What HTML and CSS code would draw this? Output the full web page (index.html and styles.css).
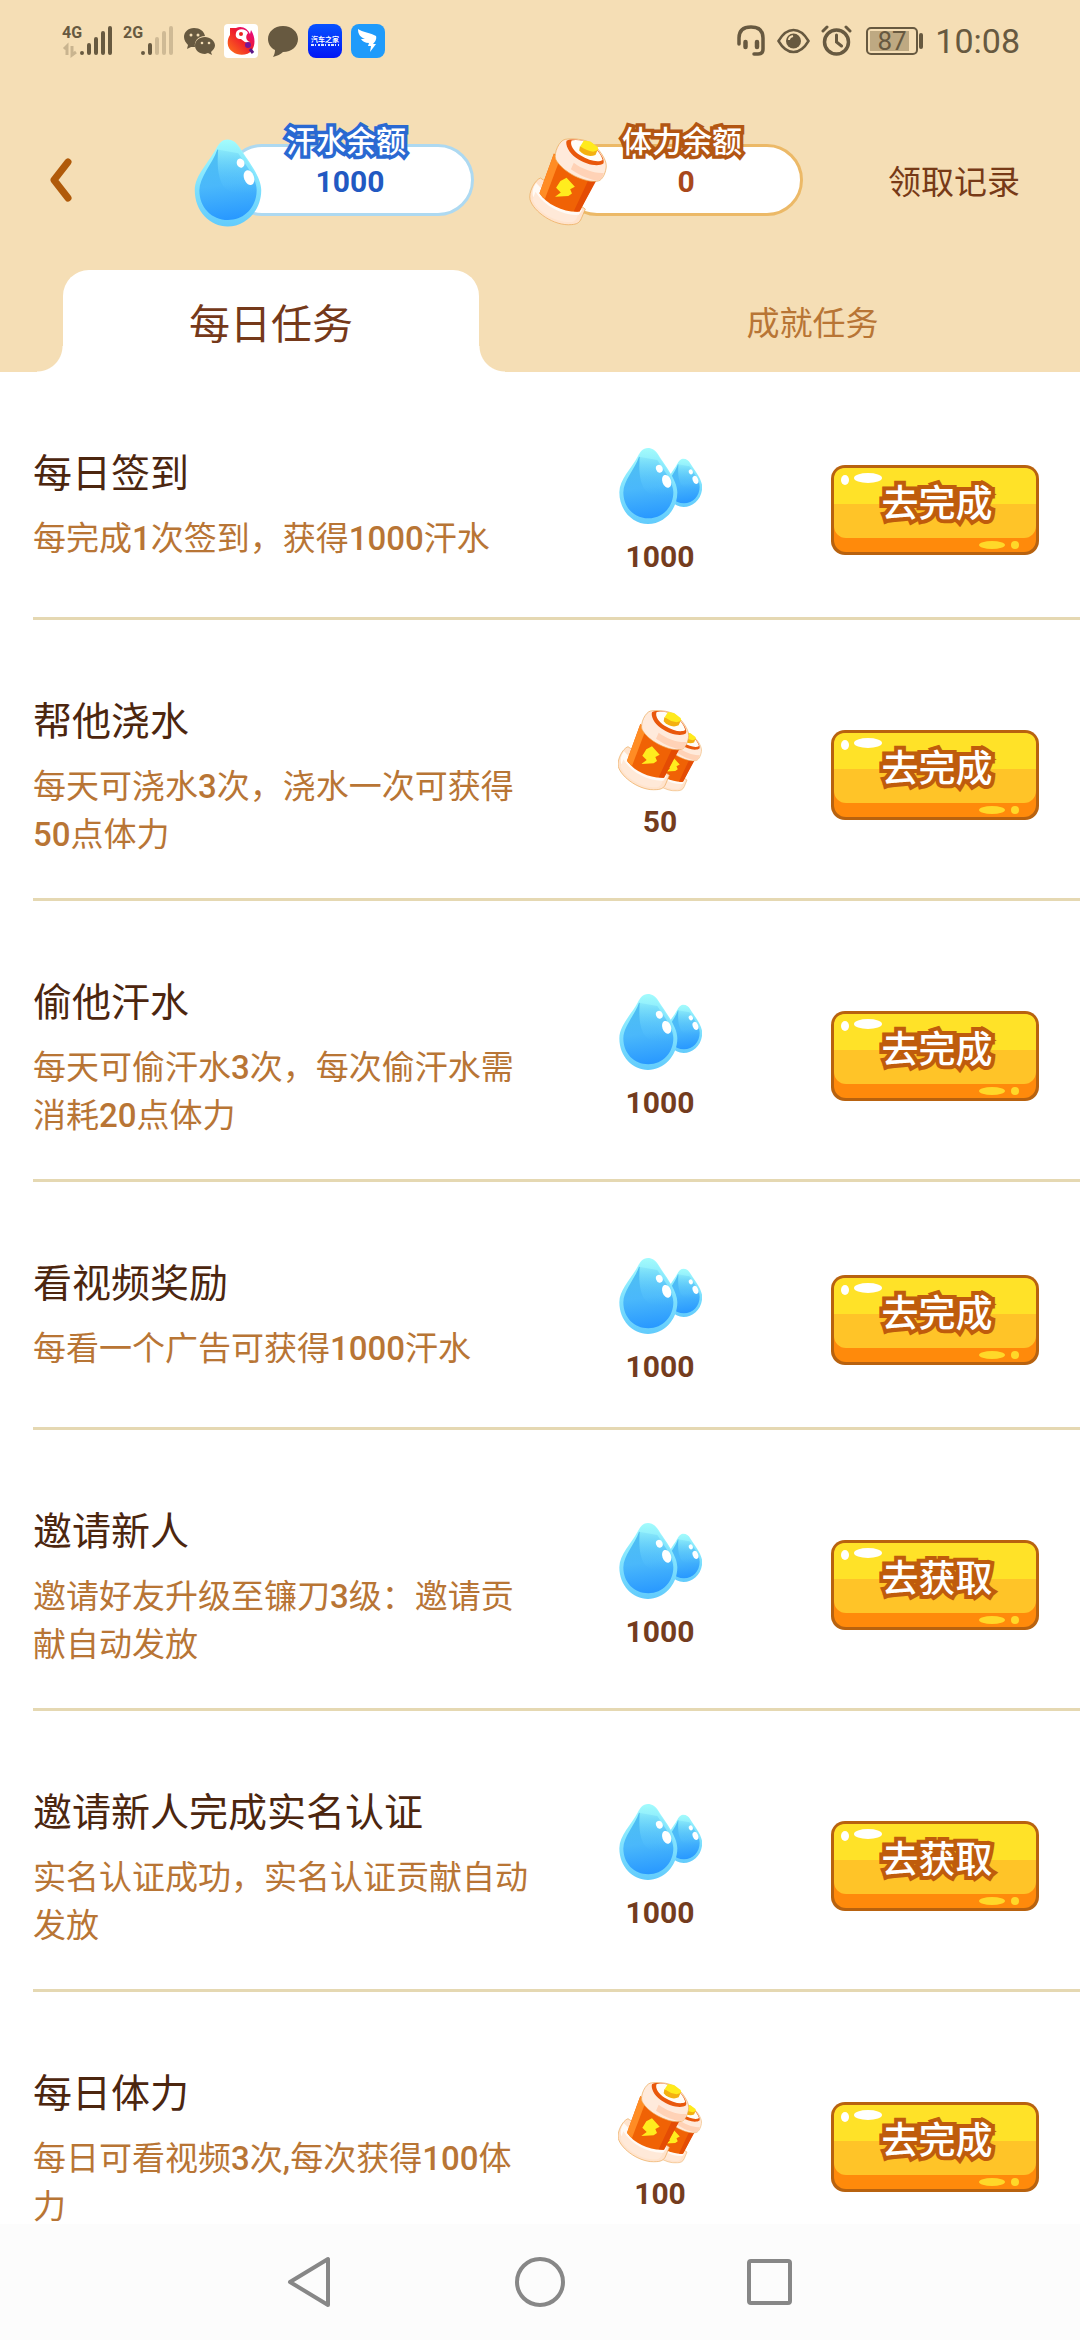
FILE: index.html
```html
<!DOCTYPE html>
<html lang="zh-CN">
<head>
<meta charset="utf-8">
<meta name="viewport" content="width=device-width, initial-scale=1">
<title>每日任务</title>
<link rel="stylesheet" href="styles.css">
</head>
<body>
<svg class="defs" aria-hidden="true">
  <defs>
    <linearGradient id="rim" x1="0" y1="0" x2="0" y2="1">
      <stop offset="0" stop-color="#a2fbff"/><stop offset="1" stop-color="#62cbfc"/>
    </linearGradient>
    <linearGradient id="core" x1="0.4" y1="0" x2="0.5" y2="1">
      <stop offset="0" stop-color="#4fc0f2"/><stop offset="0.5" stop-color="#4ab8fb"/><stop offset="1" stop-color="#2898ff"/>
    </linearGradient>
    <linearGradient id="facet" x1="0" y1="0" x2="0" y2="1">
      <stop offset="0" stop-color="#a2fbfb"/><stop offset="1" stop-color="#55c2ff" stop-opacity="0"/>
    </linearGradient>
    <symbol id="drop" viewBox="176 82 178 232">
      <path fill="url(#rim)" d="M264 84C248 84 240 97 234 108C214 146 178 178 178 217C178 272 218 312 264 312C310 312 352 272 352 217C352 180 314 136 296 106C287 91 276 84 264 84Z"/>
      <path fill="url(#core)" d="M237 110C224 148 190 182 190 217C190 262 222 295 265 295C309 295 340 260 340 217C340 184 309 148 292 120Z"/>
      <path fill="url(#facet)" d="M240 102C250 83 276 80 292 104C310 134 346 176 342 216C330 230 280 232 258 212C236 190 236 140 240 102Z"/>
      <ellipse cx="298" cy="146" rx="10" ry="12" fill="#fff" transform="rotate(-20 298 146)"/>
      <ellipse cx="320" cy="184" rx="13" ry="20" fill="#fff" transform="rotate(-20 320 184)"/>
    </symbol>
    <symbol id="cell" viewBox="172 88 216 242">
      <path fill="#ffe3cc" stroke="#eba856" stroke-width="2" d="M204 198C188 203 170 238 175 258C184 290 240 332 290 327C304 326 312 322 317 310L328 284Z"/>
      <path fill="#fffaf5" d="M192 212C182 224 180 242 184 250C216 292 270 308 310 300L320 286L240 262Z"/>
      <path fill="#ffe9d8" d="M190 236C214 276 266 302 308 300C304 312 300 318 290 320C244 322 194 290 182 258Z"/>
      <path fill="#f06205" d="M241 130L201 240C222 272 270 294 312 291L358 200Z"/>
      <path fill="#ff8c24" d="M241 130L201 240C206 247 210 251 216 256L256 150Z"/>
      <path fill="#e44c04" d="M340 196L296 290C302 291 306 292 312 291L360 202Z"/>
      <path fill="#ffeadb" stroke="#eba856" stroke-width="2" d="M272 91C256 94 240 128 246 146C264 182 330 214 364 206C376 204 386 180 386 164C386 146 366 116 344 101C322 89 290 88 272 91Z"/>
      <path fill="#ffd2b6" d="M288 174C316 194 346 205 364 205C372 203 377 194 379 184C352 186 320 174 296 156Z"/>
      <path fill="#e9580c" d="M276 95C272 106 282 128 302 142C330 162 364 168 378 158C384 148 366 120 343 103C320 91 284 88 276 95Z"/>
      <path fill="#fffdf8" d="M290 94C284 106 296 124 314 135C338 150 364 156 376 148C372 132 356 114 342 104C326 94 302 90 290 94Z"/>
      <path fill="#f4b010" d="M313 110L311 122C322 136 342 141 356 134L363 118Z"/>
      <path fill="#ffea1c" d="M324 94L342 97L362 112Q366 118 360 122L350 125Q330 122 314 110Z"/>
      <path fill="#ffec1e" d="M276 197L299 222L286 229L291 241L281 248L244 250L260 238L247 225L259 206Z"/>
    </symbol>
    <symbol id="reward-water" viewBox="174 69 252 282">
      <use href="#drop" x="315" y="115" width="113" height="147"/>
      <use href="#drop" x="176" y="82" width="178" height="232"/>
    </symbol>
    <symbol id="reward-energy" viewBox="174 82 252 282">
      <use href="#cell" x="264" y="151" width="162" height="182"/>
      <use href="#cell" x="172" y="88" width="216" height="242"/>
    </symbol>
    <symbol id="gloss" viewBox="0 0 208 90">
      <rect width="208" height="90" rx="14" fill="#b8620f"/>
      <rect x="3" y="3" width="202" height="84" rx="12" fill="#ff8a0b"/>
      <rect x="3" y="3" width="202" height="70" rx="12" fill="#ffc428"/>
      <path fill="#ffe228" d="M3 39V15Q3 3 15 3H193Q205 3 205 15V39Z"/>
      <ellipse cx="14" cy="15" rx="4" ry="5" fill="#fff"/>
      <ellipse cx="37" cy="13" rx="14" ry="5" fill="#fff"/>
      <ellipse cx="161" cy="80" rx="13" ry="4" fill="#ffd829"/>
      <ellipse cx="184" cy="80" rx="4" ry="4" fill="#ffd829"/>
    </symbol>
  </defs>
</svg>

<header class="header">
  <div class="status">
    <div class="status-group">
      <svg width="52" height="34" viewBox="0 0 52 34">
        <text x="0" y="14" class="net">4G</text>
        <g stroke="#675940" stroke-width="4" stroke-linecap="round"><path d="M20 29v0M27 21v8M34 15v14M41 9v20M48 4v25"/></g>
        <path d="M5 31V22L2 25M10 22v9l4-3" stroke="#c9b48f" stroke-width="3" fill="none"/>
      </svg>
      <svg width="51" height="34" viewBox="0 0 51 34">
        <text x="0" y="14" class="net">2G</text>
        <g stroke="#675940" stroke-width="4" stroke-linecap="round"><path d="M20 29v0M27 21v8"/><path stroke="#cfba95" d="M34 15v14M41 9v20M48 4v25"/></g>
      </svg>
      <svg width="32" height="34" viewBox="0 0 32 34" fill="#675940">
        <path d="M11 4C5 4 1 8 1 13C1 16 3 19 5 21L4 25L8 23H12C11 17 15 12 22 12C21 7 17 4 11 4Z"/>
        <path d="M22 13C16 13 12 17 12 21.500C12 26 16 30 22 30L25 29L29 31L28 28C30 26 32 24 32 21.500C32 17 27 13 22 13Z"/>
        <g fill="#f5deb5"><circle cx="8" cy="11" r="1.500"/><circle cx="15" cy="11" r="1.500"/><circle cx="19" cy="19" r="1.300"/><circle cx="26" cy="19" r="1.300"/></g>
      </svg>
      <svg width="34" height="34" viewBox="0 0 34 34">
        <defs><linearGradient id="fish" x1="1" y1="0" x2="0" y2="1"><stop offset="0" stop-color="#e3009c"/><stop offset="0.450" stop-color="#ee1c2c"/><stop offset="1" stop-color="#ff7a18"/></linearGradient></defs>
        <rect width="34" height="34" rx="4" fill="#fff"/>
        <path fill="url(#fish)" d="M6 4H12C18 1 24 5 26 10L27 6C32 14 31 22 28 26C24 32 14 32 9 28C2 24 3 15 6 11Z"/>
        <path fill="#fff" d="M12 9C13 4 22 4 24 9C21 12 22 17 26 18C21 20 19 16 17 15C13 15 11 13 12 9Z"/>
        <circle cx="17" cy="10" r="2" fill="#e8231f"/><circle cx="24" cy="21" r="3" fill="#791695"/>
        <path d="M26 25l3 4" stroke="#5c1688" stroke-width="3"/>
      </svg>
      <svg width="32" height="34" viewBox="0 0 32 34"><path fill="#675940" d="M16 2C7 2 1 8 1 15C1 20 4 24 8 26C8 29 7 31 6 33C10 32 14 30 16 28C25 28 31 22 31 15C31 8 25 2 16 2Z"/></svg>
      <svg width="34" height="34" viewBox="0 0 34 34">
        <defs><linearGradient id="auto" x1="0" y1="0" x2="0" y2="1"><stop offset="0" stop-color="#0652ff"/><stop offset="1" stop-color="#0316f5"/></linearGradient></defs>
        <rect width="34" height="34" rx="8" fill="url(#auto)"/>
        <text x="17" y="18" text-anchor="middle" class="app-name">汽车之家</text>
        <path d="M3 21h28" stroke="#dce5ff" stroke-width="2" stroke-dasharray="3 1 1 2 2 1"/>
      </svg>
      <svg width="34" height="34" viewBox="0 0 34 34">
        <rect width="34" height="34" rx="8" fill="#1f9bfb"/>
        <path fill="#fff" d="M7 5C11 8 20 9 25 12C26 15 24 18 22 20H25L19 28L20 22H17L18 19C14 19 11 17 10 15L14 15C9 13 7 10 7 5Z"/>
      </svg>
    </div>
    <div class="status-group status-right">
      <svg width="30" height="34" viewBox="0 0 30 34" fill="none" stroke="#675940" stroke-width="3.500" stroke-linecap="round"><path d="M3 20V14C3 6 8 3 15 3C22 3 27 6 27 14V25Q27 30 22 30H18"/><path stroke-width="4.500" d="M9.500 18v5M21 18v5"/></svg>
      <svg width="33" height="34" viewBox="0 0 33 34"><path fill="none" stroke="#675940" stroke-width="2.500" d="M1.500 17C5 11 10 6 16.500 6S28 11 31.500 17C28 23 23 28 16.500 28S5 23 1.500 17Z"/><circle cx="16.500" cy="17" r="7.500" fill="#675940"/><path d="M12 16Q12 13 16 12" stroke="#f5deb5" stroke-width="2" fill="none"/></svg>
      <svg width="31" height="34" viewBox="0 0 31 34" fill="none" stroke="#675940" stroke-width="3.500" stroke-linecap="round"><circle cx="15.500" cy="18" r="12"/><path stroke-width="3" d="M15.500 11v7l5 4M2 7l4-4M25 3l4 4"/></svg>
      <svg width="61" height="34" viewBox="0 0 61 34"><rect x="4" y="4" width="50" height="26" rx="4" fill="none" stroke="#675940" stroke-width="2"/><rect x="7" y="7" width="39" height="20" fill="#bea982"/><path d="M58 11v12" stroke="#675940" stroke-width="4" stroke-linecap="round"/><text x="29" y="26" text-anchor="middle" class="charge">87</text></svg>
      <span class="clock">10:08</span>
    </div>
  </div>

  <div class="topbar">
    <button class="back" aria-label="返回"><svg width="22" height="46" viewBox="0 0 22 46"><path d="M18 5L4 23L18 41" fill="none" stroke="#b05a0a" stroke-width="7" stroke-linecap="round" stroke-linejoin="round"/></svg></button>
    <div class="balances">
      <div class="balance water">
        <svg class="balance-icon" width="68" height="90"><use href="#drop"/></svg>
        <span class="balance-label">汗水余额</span>
        <span class="balance-value">1000</span>
      </div>
      <div class="balance energy">
        <svg class="balance-icon" width="78" height="88"><use href="#cell"/></svg>
        <span class="balance-label">体力余额</span>
        <span class="balance-value">0</span>
      </div>
    </div>
    <a class="records" href="#records">领取记录</a>
  </div>

  <div class="tabs" role="tablist">
    <button class="tab tab-active" role="tab" aria-selected="true">每日任务</button>
    <button class="tab" role="tab" aria-selected="false">成就任务</button>
  </div>
</header>

<main class="content">
  <ul class="tasks">
    <li class="task">
      <div class="info"><h2 class="title">每日签到</h2><p class="desc">每完成<b>1</b>次签到，获得<b>1000</b>汗水</p></div>
      <div class="reward"><svg width="84" height="94"><use href="#reward-water"/></svg><span class="amount">1000</span></div>
      <button class="go"><svg class="go-bg"><use href="#gloss"/></svg><span class="go-label">去完成</span></button>
    </li>
    <li class="task">
      <div class="info"><h2 class="title">帮他浇水</h2><p class="desc">每天可浇水<b>3</b>次，浇水一次可获得<b>50</b>点体力</p></div>
      <div class="reward"><svg width="84" height="94"><use href="#reward-energy"/></svg><span class="amount">50</span></div>
      <button class="go"><svg class="go-bg"><use href="#gloss"/></svg><span class="go-label">去完成</span></button>
    </li>
    <li class="task">
      <div class="info"><h2 class="title">偷他汗水</h2><p class="desc">每天可偷汗水<b>3</b>次，每次偷汗水需消耗<b>20</b>点体力</p></div>
      <div class="reward"><svg width="84" height="94"><use href="#reward-water"/></svg><span class="amount">1000</span></div>
      <button class="go"><svg class="go-bg"><use href="#gloss"/></svg><span class="go-label">去完成</span></button>
    </li>
    <li class="task">
      <div class="info"><h2 class="title">看视频奖励</h2><p class="desc">每看一个广告可获得<b>1000</b>汗水</p></div>
      <div class="reward"><svg width="84" height="94"><use href="#reward-water"/></svg><span class="amount">1000</span></div>
      <button class="go"><svg class="go-bg"><use href="#gloss"/></svg><span class="go-label">去完成</span></button>
    </li>
    <li class="task">
      <div class="info"><h2 class="title">邀请新人</h2><p class="desc">邀请好友升级至镰刀<b>3</b>级：邀请贡献自动发放</p></div>
      <div class="reward"><svg width="84" height="94"><use href="#reward-water"/></svg><span class="amount">1000</span></div>
      <button class="go"><svg class="go-bg"><use href="#gloss"/></svg><span class="go-label">去获取</span></button>
    </li>
    <li class="task">
      <div class="info"><h2 class="title">邀请新人完成实名认证</h2><p class="desc">实名认证成功，实名认证贡献自动发放</p></div>
      <div class="reward"><svg width="84" height="94"><use href="#reward-water"/></svg><span class="amount">1000</span></div>
      <button class="go"><svg class="go-bg"><use href="#gloss"/></svg><span class="go-label">去获取</span></button>
    </li>
    <li class="task">
      <div class="info"><h2 class="title">每日体力</h2><p class="desc">每日可看视频<b>3</b>次<b>,</b>每次获得<b>100</b>体力</p></div>
      <div class="reward"><svg width="84" height="94"><use href="#reward-energy"/></svg><span class="amount">100</span></div>
      <button class="go"><svg class="go-bg"><use href="#gloss"/></svg><span class="go-label">去完成</span></button>
    </li>
  </ul>
</main>

<nav class="sysnav">
  <button aria-label="返回"><svg width="50" height="54" viewBox="0 0 50 54"><path d="M43 4V50L5 27Z" fill="none" stroke="#878787" stroke-width="4" stroke-linejoin="round"/></svg></button>
  <button aria-label="主屏幕"><svg width="50" height="54" viewBox="0 0 50 54"><circle cx="25" cy="27" r="23" fill="none" stroke="#878787" stroke-width="4"/></svg></button>
  <button aria-label="最近任务"><svg width="50" height="54" viewBox="0 0 50 54"><rect x="4" y="6" width="41" height="42" rx="2" fill="none" stroke="#878787" stroke-width="4"/></svg></button>
</nav>
</body>
</html>
```
FILE: styles.css
```css
* {
  box-sizing: border-box;
}

body {
  margin: 0;
  height: 100vh;
  display: flex;
  flex-direction: column;
  background: #fff;
  font-family: Roboto, "Noto Sans CJK SC", sans-serif;
  font-weight: 400;
}

button {
  padding: 0;
  border: 0;
  background: none;
  color: inherit;
  font: inherit;
}

svg {
  display: block;
}

.defs {
  position: absolute;
  width: 0;
  height: 0;
}

/* Header */

.header {
  flex: none;
  background: #f5deb5;
}

.status {
  height: 90px;
  padding: 0 60px 8px 62px;
  display: flex;
  align-items: center;
  justify-content: space-between;
  color: #675940;
}

.status-group {
  display: flex;
  align-items: center;
  gap: 9px;
}

.status-right {
  gap: 11px;
}

.net {
  font: 700 16px Roboto, sans-serif;
  fill: #675940;
}

.app-name {
  font: 700 7px "Noto Sans CJK SC", sans-serif;
  fill: #fff;
}

.charge {
  font: 400 26px Roboto, sans-serif;
  fill: #675940;
}

.clock {
  font-size: 34px;
  line-height: 40px;
}

.topbar {
  height: 180px;
  padding: 0 60px 0 50px;
  display: flex;
  align-items: center;
}

.balances {
  flex: 1;
  padding-left: 122px;
  display: flex;
  gap: 55px;
}

.balance {
  position: relative;
  width: 280px;
  height: 72px;
  padding-left: 32px;
  display: flex;
  flex-direction: column;
  align-items: center;
}

.balance::before {
  content: "";
  position: absolute;
  inset: 0 0 0 32px;
  background: #fff;
  border: 3px solid #add9f1;
  border-radius: 36px;
}

.energy {
  width: 274px;
  padding-left: 40px;
}

.energy::before {
  border-color: #ecb967;
}

.balance-icon {
  position: absolute;
  left: 0;
  top: -6px;
}

.balance-label {
  position: relative;
  margin-top: -22px;
  margin-right: 8px;
  font-size: 30px;
  line-height: 40px;
  font-weight: 500;
  color: #fff;
  -webkit-text-stroke: 7px #2a69d2;
  paint-order: stroke fill;
}

.energy .balance-label {
  -webkit-text-stroke-color: #b35613;
}

.balance-value {
  position: relative;
  font-size: 30px;
  line-height: 40px;
  font-weight: 700;
  color: #2259c2;
}

.energy .balance-value {
  color: #a9481b;
}

.records {
  padding-top: 5px;
  font-size: 33px;
  line-height: 48px;
  color: #773a17;
  text-decoration: none;
}

.tabs {
  height: 102px;
  padding-left: 63px;
  display: flex;
}

.tab {
  position: relative;
  flex: 1;
  padding-right: 67px;
  padding-left: 133px;
  font-size: 33px;
  color: #b87535;
}

.tab-active {
  flex: none;
  width: 416px;
  padding: 0;
  background: #fff;
  border-radius: 26px 26px 0 0;
  font-size: 41px;
  color: #75391a;
}

.tab-active::before,
.tab-active::after {
  content: "";
  position: absolute;
  bottom: 0;
  width: 26px;
  height: 26px;
}

.tab-active::before {
  right: 100%;
  background: radial-gradient(circle at 0 0, transparent 25px, #fff 26px);
}

.tab-active::after {
  left: 100%;
  background: radial-gradient(circle at 100% 0, transparent 25px, #fff 26px);
}

/* Task list */

.content {
  flex: 1;
  min-height: 0;
  overflow: hidden;
}

.tasks {
  margin: 0;
  padding: 0 0 0 33px;
  list-style: none;
}

.task {
  display: grid;
  grid-template-columns: minmax(0, 1fr) 254px 252px;
  align-items: center;
  padding: 71px 41px 40px 0;
  border-bottom: 3px solid #e5d8b2;
}

.info {
  align-self: start;
}

.title {
  margin: 0;
  font-size: 39px;
  line-height: 63px;
  font-weight: 400;
  color: #4c260f;
}

.desc {
  margin: 9px 0 -1px;
  font-size: 33px;
  line-height: 48px;
  color: #b87535;
}

.desc b {
  font-weight: 500;
}

.reward {
  display: flex;
  flex-direction: column;
  align-items: center;
}

.amount {
  font-size: 30px;
  line-height: 40px;
  font-weight: 700;
  color: #743c1e;
}

.go {
  position: relative;
  justify-self: end;
  width: 208px;
  height: 90px;
  padding: 0 0 10px 4px;
}

.go-bg {
  position: absolute;
  inset: 0;
  width: 100%;
  height: 100%;
}

.go-label {
  position: relative;
  font-size: 37px;
  line-height: 48px;
  font-weight: 500;
  color: #fff;
  -webkit-text-stroke: 8px #bf5c0c;
  paint-order: stroke fill;
}

/* System navigation */

.sysnav {
  flex: none;
  height: 116px;
  display: flex;
  align-items: center;
  justify-content: center;
  gap: 180px;
  background: #fcfcfc;
}
```
